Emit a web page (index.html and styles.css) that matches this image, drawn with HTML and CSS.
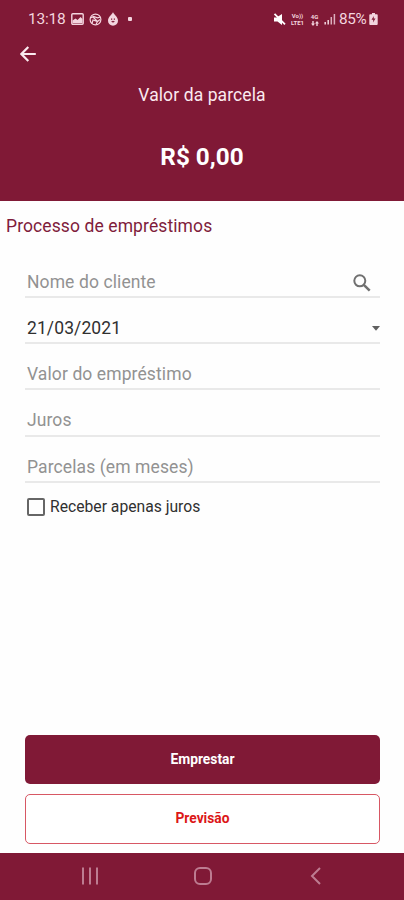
FILE: index.html
```html
<!DOCTYPE html>
<html lang="pt-BR">
<head>
<meta charset="utf-8">
<meta name="viewport" content="width=device-width, initial-scale=1">
<title>Processo de empréstimos</title>
<link rel="stylesheet" href="styles.css">
</head>
<body>
<div class="screen">
  <header class="header">
    <div class="status">
      <span class="clock">13:18</span>
      <svg class="st-image" width="13" height="12" viewBox="0 0 13 12"><rect x=".8" y=".8" width="11.4" height="10.4" rx="1" fill="none" stroke="currentColor" stroke-width="1.4"/><path d="M1.5 10V7.5l3-2 2 1.5 3-3 2 2V10z" fill="currentColor"/></svg>
      <svg class="st-ball" width="13" height="13" viewBox="0 0 13 13"><g fill="none" stroke="currentColor" stroke-width="1.2"><circle cx="6.5" cy="6.5" r="5.4"/><path d="M1.5 5l3-1.5 4 1.3L11.5 4M3 10.5l1-3.5 4.5 1.5 2.5-2M4 4l4.5 4.5M8.5 8.5L7 11.5"/></g></svg>
      <svg class="st-drop" width="12" height="14" viewBox="0 0 12 14"><path d="M6 0c.6 2.4 5 4.700 5 8.700A5 5 0 0 1 1 8.700C1 4.700 5.400 2.400 6 0z" fill="currentColor"/><path d="M4 7.200h1.200M6.800 7.200H8M4.700 9.300Q6 10.500 7.300 9.300" fill="none" stroke="#801936" stroke-width="1.200"/></svg>
      <span class="st-dot"></span>
      <span class="grow"></span>
      <svg class="st-mute" width="13" height="13" viewBox="0 0 13 13"><path d="M1 4.500h2.500L9 1v11L4.500 8.500H1z" fill="currentColor"/><path d="M1.500 .8l10.500 10.500" stroke="currentColor" stroke-width="1.800"/></svg>
      <span class="st-tiny st-volte"><span>Vo))</span><span>LTE1</span></span>
      <span class="st-tiny st-4g"><span>4G</span><svg width="8" height="5" viewBox="0 0 8 5"><path d="M2 5L0 2.500h1.300V0h1.400v2.500H4zM6 0L4 2.500h1.300V5h1.400V2.500H8z" fill="currentColor"/></svg></span>
      <svg class="st-signal" width="12" height="12" viewBox="0 0 12 12"><path d="M1.200 9v2.500M4.200 7v4.500" stroke="currentColor" stroke-width="1.500"/><path d="M7.300 4v7.500M10.400 1v10.500" stroke="currentColor" stroke-width="1.500" opacity=".8"/></svg>
      <span class="percent">85%</span>
      <svg class="st-batt" width="9" height="12" viewBox="0 0 9 12"><path d="M3 0h3v1.200h1.800q.9 0 .9.900v8.900q0 .900-.9.900H1.200q-.9 0-.9-.9V2.100q0-.9.900-.9H3z" fill="currentColor"/><path d="M4.800 3L2.500 6.700h1.800L4 9.500l2.500-4H4.700z" fill="#801936"/></svg>
    </div>
    <svg class="back" width="16" height="16" viewBox="0 0 16 16"><path d="M15.800 8H1.500M8.300 1L1.400 8l6.900 7" fill="none" stroke="currentColor" stroke-width="2.200"/></svg>
    <div class="label"><span>Valor da parcela</span></div>
    <div class="amount"><span>R$ 0,00</span></div>
  </header>
  <main class="main">
    <h1 class="title"><span>Processo de empréstimos</span></h1>
    <div class="form">
      <div class="field"><span>Nome do cliente</span>
        <svg class="search" width="18" height="18" viewBox="0 0 18 18"><g fill="none" stroke="currentColor"><circle cx="6.800" cy="6.800" r="5.500" stroke-width="2"/><path d="M10.800 10.800l5.900 5.900" stroke-width="2.500"/></g></svg></div>
      <div class="field filled"><span>21/03/2021</span>
        <svg class="caret" width="8" height="5" viewBox="0 0 8 5"><path d="M0 0h8L4 4.800z" fill="currentColor"/></svg></div>
      <div class="field"><span>Valor do empréstimo</span></div>
      <div class="field"><span>Juros</span></div>
      <div class="field"><span>Parcelas (em meses)</span></div>
      <div class="check"><span class="box"></span><span class="check-label">Receber apenas juros</span></div>
    </div>
    <div class="actions">
      <div class="btn primary"><span>Emprestar</span></div>
      <div class="btn outline"><span>Previsão</span></div>
    </div>
  </main>
  <nav class="nav">
    <svg width="18" height="18" viewBox="0 0 18 18"><path d="M2 .5v17M9 .5v17M16 .5v17" stroke="currentColor" stroke-width="2"/></svg>
    <svg width="18" height="18" viewBox="0 0 18 18"><rect x="1" y="1" width="16" height="16" rx="5" fill="none" stroke="currentColor" stroke-width="2"/></svg>
    <svg width="18" height="18" viewBox="0 0 18 18"><path d="M13 1L5 9l8 8" fill="none" stroke="currentColor" stroke-width="2"/></svg>
  </nav>
</div>
</body>
</html>
```
FILE: styles.css
```css
* { box-sizing: border-box; }
body { margin: 0; background: #fefefe; font-family: Roboto, "Liberation Sans", sans-serif; }
svg { display: block; flex: none; }
.screen { width: 404px; height: 900px; display: flex; flex-direction: column; overflow: hidden; }
.header { height: 201px; background: #801936; color: #fbeaf0; flex: none; }
.status { height: 38px; padding: 0 26px 0 28px; display: flex; align-items: center; color: #f3d5df; }
.clock { font-size: 15.5px; letter-spacing: -.2px; width: 43px; }
.st-ball { margin-left: 5px; }
.st-drop { margin-left: 5px; }
.st-dot { width: 4px; height: 4px; border-radius: 1px; background: currentColor; margin-left: 9px; }
.grow { flex: 1; }
.st-mute { margin-right: 1px; color: #fff; }
.st-tiny { display: flex; flex-direction: column; align-items: center; gap: 1px; font-size: 6px; line-height: 7px; font-weight: 700; }
.st-volte { width: 15px; margin-left: 3px; gap: 0; }
.st-4g { width: 9px; margin-left: 5px; }
.st-signal { margin-left: 5px; }
.percent { font-size: 15.3px; width: 28px; margin-left: 3px; letter-spacing: -.4px; }
.st-batt { margin-left: 2px; }
.back { margin: 8px 0 0 20px; }
.label { margin-top: 21px; height: 24px; line-height: 24px; text-align: center; font-size: 17.5px; letter-spacing: .1px; }
.amount { margin-top: 36px; height: 28px; line-height: 28px; text-align: center; font-size: 24.3px; font-weight: 700; color: #fff; }
.main { flex: 1; display: flex; flex-direction: column; }
.title { margin: 13px 0 0 6px; height: 24px; line-height: 24px; font-size: 17.5px; font-weight: 400; letter-spacing: .1px; color: #7f1c3b; }
.form { margin: 29px 24px 0 25px; flex: 1; }
.field { height: 46.2px; padding: 16px 0 0 2px; border-bottom: 2px solid #e9e9e9; display: flex; align-items: center; justify-content: space-between; font-size: 17.5px; letter-spacing: .1px; color: #929292; }
.field:first-child { height: 31px; padding-top: 1px; }
.field.filled { color: #303030; }
.search { margin: 1px 9px 0 0; color: #707070; }
.caret { margin-top: 1px; color: #606060; }
.check { display: flex; align-items: center; height: 20px; margin: 14px 0 0 2px; }
.box { width: 18px; height: 18px; border: 2px solid #666; border-radius: 2px; }
.check-label { margin-left: 5px; font-size: 15.7px; color: #303030; }
.actions { margin: 0 24px 9px 25px; display: flex; flex-direction: column; gap: 10px; }
.btn { height: 50px; border-radius: 5px; display: flex; align-items: center; justify-content: center; font-size: 13.8px; font-weight: 700; padding-bottom: 1px; }
.primary { height: 49px; background: #801936; color: #fff; }
.outline { border: 1px solid #d75764; color: #dc1717; background: #fff; padding-bottom: 2px; }
.nav { height: 47px; flex: none; background: #801936; color: #bd7c91; display: flex; justify-content: space-between; align-items: center; padding: 0 79px 1px 81px; }
```
